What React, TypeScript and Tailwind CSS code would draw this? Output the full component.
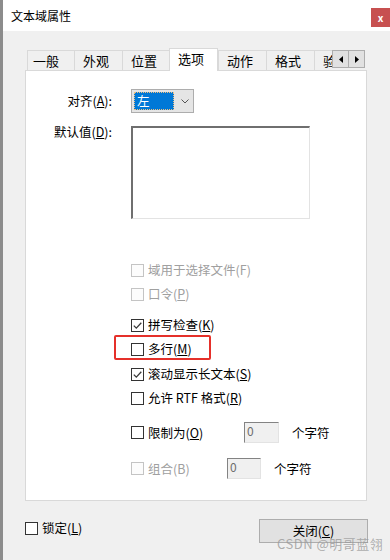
import React from "react"

const font = { fontFamily: '"Noto Sans CJK SC", "Noto Sans", sans-serif' }

function Box({ checked = false, disabled = false }: { checked?: boolean; disabled?: boolean }) {
  return (
    <span
      className={
        "w-[13px] h-[13px] shrink-0 border flex items-center justify-center " +
        (disabled ? "border-[#c4c4c4] bg-[#fcfcfc]" : "border-[#333333] bg-white")
      }
    >
      {checked && (
        <svg width="11" height="11" viewBox="0 0 11 11">
          <path d="M1.8 5.6 L4.3 8.1 L9.3 2.8" fill="none" stroke="#3a3a3a" strokeWidth="1.3" />
        </svg>
      )}
    </span>
  )
}

function Check({
  label,
  acc,
  underline = true,
  checked,
  disabled,
  className = "",
}: {
  label: string
  acc: string
  underline?: boolean
  checked?: boolean
  disabled?: boolean
  className?: string
}) {
  return (
    <div className={"flex items-center h-[16px] " + className}>
      <Box checked={checked} disabled={disabled} />
      <span className={"ml-[4px] text-[12.5px] leading-[16px] " + (disabled ? "text-[#a0a0a0]" : "text-black")}>
        {label}({underline ? <u>{acc}</u> : acc})
      </span>
    </div>
  )
}

const tabs = [
  { t: "一般", w: "w-[47px]", pl: "pl-[5px]" },
  { t: "外观", w: "w-[48px]", pl: "pl-[8px]" },
  { t: "位置", w: "w-[47px]", pl: "pl-[8px]" },
  { t: "选项", w: "w-[49px]", pl: "pl-[8px]", on: true },
  { t: "动作", w: "w-[48px]", pl: "pl-[8px]" },
  { t: "格式", w: "w-[48px]", pl: "pl-[8px]" },
  { t: "验证", w: "w-[18px]", pl: "pl-[8px]" },
]

export default function App() {
  return (
    <div className="w-[390px] h-[560px] flex bg-white overflow-hidden relative" style={font}>
      {/* 窗口左边框 */}
      <div className="w-[3px] bg-[#8c8c8c] shrink-0" />

      <div className="flex-1 flex flex-col">
        {/* 标题栏 */}
        <div className="h-[31px] flex justify-between bg-white">
          <span className="pl-[8px] self-center text-[12px] leading-[16px] text-black">文本域属性</span>
          <div className="mt-[8px] w-[19px] h-[19px] bg-[#c75050] flex items-center justify-center text-white text-[10px] font-bold leading-none">
            x
          </div>
        </div>

        {/* 主体 */}
        <div className="flex-1 bg-[#f0f0f0] pt-[17px] pl-[22px] pr-[20px] flex flex-col">
          {/* 选项卡 */}
          <div className="flex items-end h-[22px] ml-[2px]">
            {tabs.map((tab) =>
              tab.on ? (
                <div
                  key={tab.t}
                  className={`relative z-10 -mb-px h-[23px] ${tab.w} ${tab.pl} bg-white border border-b-0 border-[#d9d9d9] flex items-center pb-[2px] text-[13px] text-black whitespace-nowrap`}
                >
                  {tab.t}
                </div>
              ) : (
                <div
                  key={tab.t}
                  className={`h-[20px] ${tab.w} ${tab.pl} bg-[#f0f0f0] border border-b-0 border-r-0 border-[#d9d9d9] flex items-center text-[13px] text-black overflow-hidden whitespace-nowrap`}
                >
                  {tab.t}
                </div>
              )
            )}
            <div className="flex self-start mt-[2px]">
              {["left", "right"].map((d) => (
                <div
                  key={d}
                  className="w-[17px] h-[18px] bg-[#e1e1e1] border border-[#adadad] -ml-px first:ml-0 flex items-center justify-center"
                >
                  <svg width="4" height="7" viewBox="0 0 4 7">
                    {d === "left" ? <path d="M4 0 L0 3.5 L4 7 Z" fill="#000" /> : <path d="M0 0 L4 3.5 L0 7 Z" fill="#000" />}
                  </svg>
                </div>
              ))}
            </div>
          </div>

          {/* 面板 */}
          <div className="h-[431px] w-[342px] border border-[#d9d9d9] bg-white pt-[18px] flex flex-col">
            <div className="flex items-center">
              <span className="w-[86px] text-right text-[12.5px] leading-[16px]">
                对齐(<u>A</u>):
              </span>
              <div className="ml-[19px] w-[63px] h-[24px] bg-[#e5e5e5] border border-[#adadad] flex items-center pl-[2px]">
                <div className="w-[40px] h-[18px] bg-[#0078d7] outline-1 outline-dotted outline-[#f0c080] -outline-offset-1 text-white text-[12.5px] leading-[18px] pl-[3px]">
                  左
                </div>
                <svg className="ml-[7px]" width="8" height="5" viewBox="0 0 8 5">
                  <path d="M0.5 0.5 L4 4 L7.5 0.5" fill="none" stroke="#555" strokeWidth="1" />
                </svg>
              </div>
            </div>

            <div className="flex items-start mt-[13px]">
              <span className="w-[86px] text-right text-[12.5px] leading-[16px] -mt-[2px]">
                默认值(<u>D</u>):
              </span>
              <div className="ml-[19px] w-[179px] h-[93px] bg-white border-t-2 border-l-2 border-r border-b border-t-[#6f6f6f] border-l-[#6f6f6f] border-r-[#e3e3e3] border-b-[#e3e3e3]" />
            </div>

            <div className="ml-[105px] flex flex-col">
              <Check className="mt-[43px]" label="域用于选择文件" acc="F" underline={false} disabled />
              <Check className="mt-[8px]" label="口令" acc="P" disabled />
              <Check className="mt-[15px]" label="拼写检查" acc="K" checked />
              <div className="relative mt-[8px]">
                <Check label="多行" acc="M" />
                <span className="absolute left-[-17px] top-[-6px] w-[97px] h-[25px] border-2 border-[#e5302a] rounded-[2px]" />
              </div>
              <Check className="mt-[9px]" label="滚动显示长文本" acc="S" checked />
              <Check className="mt-[8px]" label="允许 RTF 格式" acc="R" />

              <div className="flex items-center mt-[16px] h-[21px]">
                <div className="w-[113px]">
                  <Check label="限制为" acc="O" />
                </div>
                <div className="w-[35px] h-[21px] bg-[#f0f0f0] border-t border-l border-[#838383] border-r-[#e3e3e3] border-b-[#e3e3e3] border-r border-b text-[12px] leading-[16px] text-[#6d6d6d] pl-[2px]">
                  0
                </div>
                <span className="ml-[13px] text-[12.5px] leading-[16px]">个字符</span>
              </div>

              <div className="flex items-center mt-[15px] h-[21px]">
                <div className="w-[96px]">
                  <Check label="组合" acc="B" underline={false} disabled />
                </div>
                <div className="w-[34px] h-[21px] bg-[#f0f0f0] border-t border-l border-[#838383] border-r-[#e3e3e3] border-b-[#e3e3e3] border-r border-b text-[12px] leading-[16px] text-[#6d6d6d] pl-[2px]">
                  0
                </div>
                <span className="ml-[13px] text-[12.5px] leading-[16px]">个字符</span>
              </div>
            </div>
          </div>

          {/* 底部 */}
          <div className="flex justify-between items-start mt-[18px] w-[343px]">
            <div className="mt-px">
              <Check label="锁定" acc="L" />
            </div>
            <button className="w-[109px] h-[24px] bg-[#e1e1e1] border border-[#adadad] text-[12.5px] leading-[16px] text-black" style={font}>
              关闭(<u>C</u>)
            </button>
          </div>
        </div>
      </div>

      {/* 水印 */}
      <span className="absolute left-[277px] top-[537px] text-[13px] leading-[14px] text-[#9a9a9a]/80 tracking-[0.5px]">
        CSDN @明哥蓝翎
      </span>
    </div>
  )
}
